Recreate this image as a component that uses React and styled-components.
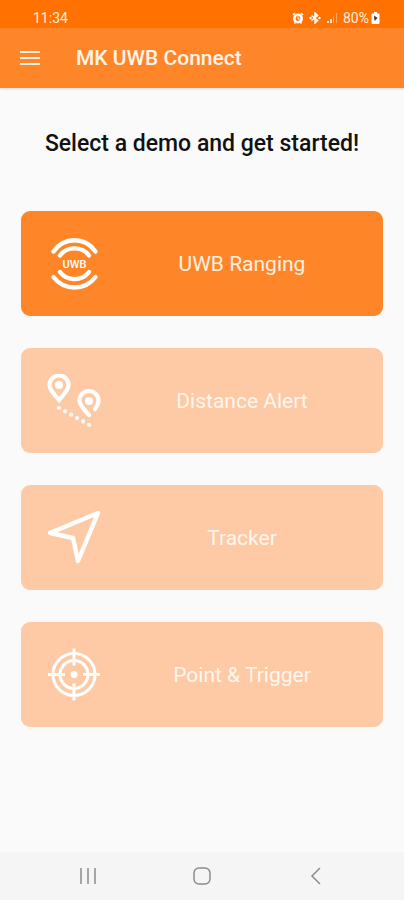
import React from "react";
import styled, { createGlobalStyle } from "styled-components";

const UwbIcon = () => (
  <Icon viewBox="0 0 54 54" strokeWidth="4.4">
    <path d="M6.5 14.5 C17 -0.5 38 -0.5 48.5 14.5" />
    <path d="M13 18.5 C20 9 35 9 42 18.5" />
    <path d="M13 35 C20 44.5 35 44.5 42 35" />
    <path d="M6.5 40 C17 54 38 54 48.5 40" />
    <IconText x="27.5" y="31">
      UWB
    </IconText>
  </Icon>
);

const DistanceIcon = () => (
  <Icon viewBox="0 0 54 54" strokeWidth="4.2">
    <path d="M12 26 C8 21 2.5 16.5 2.5 11 A9.5 9.5 0 0 1 21.5 11 C21.5 16.5 16 21 12 26 Z" />
    <circle cx="12" cy="11" r="4" fill="#fff" stroke="none" />
    <path d="M42 41 C38 36 32.5 32 32.5 26.5 A9.5 9.5 0 0 1 51.5 26.5 C51.5 30 50 32.5 48 35" />
    <circle cx="42" cy="27" r="4" fill="#fff" stroke="none" />
    <path d="M12 34 L42.5 51" strokeDasharray="0 6.9" />
  </Icon>
);

const TrackerIcon = () => (
  <Icon viewBox="0 0 54 54" strokeWidth="4.4" strokeLinejoin="round">
    <path d="M51 2 L3 22 L26 27 L31 50 Z" />
  </Icon>
);

const TargetIcon = () => (
  <Icon viewBox="0 0 54 54" strokeWidth="3" strokeLinecap="butt">
    <circle cx="27" cy="26.5" r="21" />
    <circle cx="27" cy="26.5" r="14" />
    <path d="M27 0.5 V17.5 M27 35.5 V52.5 M1 26.5 H18 M36 26.5 H53" />
    <circle cx="27" cy="26.5" r="3.5" fill="#fff" stroke="none" />
  </Icon>
);

const demos = [
  { name: "UWB Ranging", icon: UwbIcon, enabled: true },
  { name: "Distance Alert", icon: DistanceIcon },
  { name: "Tracker", icon: TrackerIcon },
  { name: "Point & Trigger", icon: TargetIcon },
];

const App = () => {
  return (
    <>
      <GlobalStyle />
      <Screen>
        <StatusBar>
          <span>11:34</span>
          <StatusIcons>
            <svg width="12" height="12" viewBox="0 0 12 12">
              <circle cx="6" cy="6.5" r="3.7" fill="none" stroke="#fff" strokeWidth="2.6" />
              <path d="M1 3 L3 1 M9 1 L11 3 M2.5 11.5 L3.5 10 M9.5 11.5 L8.5 10" stroke="#fff" strokeWidth="1.4" />
              <path d="M6 4.5 V7 H8" fill="none" stroke="#fff" />
            </svg>
            <svg width="12" height="12" viewBox="0 0 12 12">
              <path d="M2.5 3.5 L8.5 8.5 L6 11 V1 L8.5 3.5 L2.5 8.5" fill="none" stroke="#fff" strokeWidth="1.6" />
              <circle cx="1.5" cy="6" r="1.2" fill="#fff" />
              <circle cx="10.5" cy="6" r="1.2" fill="#fff" />
            </svg>
            <svg width="12" height="12" viewBox="0 0 12 12" fill="#fff">
              <path d="M1 9 H3 V11 H1 Z M4 7 H6 V11 H4 Z" opacity="0.8" />
              <path d="M7 4 H8 V11 H7 Z M10 1 H11 V11 H10 Z" opacity="0.4" />
            </svg>
            <Battery>
              80%
              <svg width="9" height="12" viewBox="0 0 9 12">
                <path d="M3 0 H6 V1.5 H7.5 Q8.5 1.5 8.5 2.5 V11 Q8.5 12 7.5 12 H1.5 Q0.5 12 0.5 11 V2.5 Q0.5 1.5 1.5 1.5 H3 Z" fill="#fff" />
                <path d="M3 3.5 L6.5 6 L3.5 9 Z" fill="#4a3020" />
              </svg>
            </Battery>
          </StatusIcons>
        </StatusBar>
        <AppBar>
          <MenuButton type="button" aria-label="Open menu">
            <svg width="20" height="14" viewBox="0 0 20 14">
              <path d="M0 1 H20 M0 7 H20 M0 13 H20" stroke="#fff0e2" strokeWidth="2" />
            </svg>
          </MenuButton>
          <Title>MK UWB Connect</Title>
        </AppBar>
        <Main>
          <Heading>Select a demo and get started!</Heading>
          <DemoList>
            {demos.map(({ name, icon: DemoIcon, enabled }) => (
              <DemoButton key={name} type="button" $enabled={enabled}>
                <DemoIcon />
                <DemoName>{name}</DemoName>
              </DemoButton>
            ))}
          </DemoList>
        </Main>
        <NavBar>
          <NavButton type="button" aria-label="Recent apps">
            <svg width="18" height="18" viewBox="0 0 18 18">
              <path d="M2 1 V17 M9 1 V17 M16 1 V17" />
            </svg>
          </NavButton>
          <NavButton type="button" aria-label="Home">
            <svg width="18" height="18" viewBox="0 0 18 18">
              <rect x="1" y="1" width="16" height="16" rx="5" />
            </svg>
          </NavButton>
          <NavButton type="button" aria-label="Back">
            <svg width="18" height="18" viewBox="0 0 18 18">
              <path d="M13 1 L5 9 L13 17" />
            </svg>
          </NavButton>
        </NavBar>
      </Screen>
    </>
  );
};

export default App;

const GlobalStyle = createGlobalStyle`
  * {
    box-sizing: border-box;
  }
  body {
    margin: 0;
    font-family: Roboto, sans-serif;
    background-color: #fafafa;
  }
  button {
    border: none;
    padding: 0;
    background: none;
    font-family: inherit;
    cursor: pointer;
  }
`;

const Screen = styled.div`
  display: flex;
  flex-direction: column;
  min-height: 100vh;
`;

const StatusBar = styled.div`
  display: flex;
  align-items: flex-end;
  justify-content: space-between;
  height: 28px;
  padding: 0 24px 2px 33px;
  background-color: #ff7100;
  color: #ffeedd;
  font-size: 14px;
  line-height: 16px;
`;

const StatusIcons = styled.div`
  display: flex;
  align-items: center;
  gap: 5px;
`;

const Battery = styled.span`
  display: flex;
  align-items: center;
  gap: 2px;
`;

const AppBar = styled.header`
  display: flex;
  align-items: center;
  gap: 36px;
  height: 60px;
  padding: 0 20px;
  background-color: #ff8628;
  box-shadow: 0 1px 2px rgba(0, 0, 0, 0.15);
`;

const MenuButton = styled.button`
  display: flex;
`;

const Title = styled.h1`
  margin: 0;
  color: #fff4ea;
  font-size: 21px;
  font-weight: 500;
  line-height: 26px;
`;

const Main = styled.main`
  flex: 1;
  padding: 41px 21px;
`;

const Heading = styled.h2`
  margin: 0;
  color: #111;
  font-size: 23px;
  font-weight: 500;
  line-height: 30px;
  text-align: center;
`;

const DemoList = styled.div`
  display: flex;
  flex-direction: column;
  gap: 32px;
  margin-top: 52px;
`;

const DemoButton = styled.button`
  display: flex;
  align-items: center;
  width: 100%;
  height: 105px;
  padding-left: 26px;
  border-radius: 9px;
  background-color: ${({ $enabled }) => ($enabled ? "#ff8628" : "#fdcaa5")};
  color: ${({ $enabled }) => ($enabled ? "#fff0e2" : "#fff6ee")};
`;

const DemoName = styled.span`
  flex: 1;
  font-size: 21px;
  line-height: 26px;
  text-align: center;
`;

const Icon = styled.svg.attrs((props) => ({
  strokeLinecap: props.strokeLinecap || "round",
}))`
  flex: none;
  width: 54px;
  height: 54px;
  fill: none;
  stroke: #fff;
`;

const IconText = styled.text`
  fill: #fff;
  stroke: none;
  font-size: 11px;
  font-weight: 500;
  text-anchor: middle;
`;

const NavBar = styled.nav`
  display: flex;
  justify-content: center;
  gap: 66px;
  height: 48px;
  background-color: #f5f5f5;
`;

const NavButton = styled.button`
  display: flex;
  align-items: center;
  justify-content: center;
  width: 48px;

  svg {
    fill: none;
    stroke: #8c8c8c;
    stroke-width: 1.5;
  }
`;
